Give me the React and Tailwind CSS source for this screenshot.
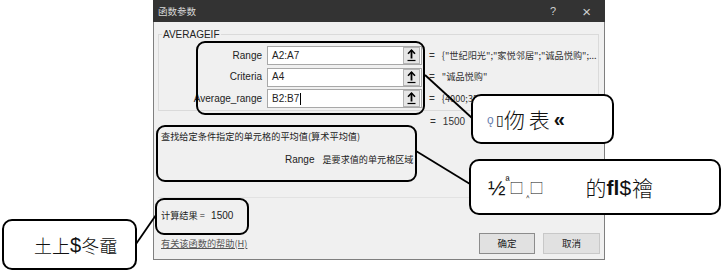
import React from "react";

const UI = { fontFamily: '"Liberation Sans", "Noto Sans CJK SC", sans-serif' };
const CJK = { fontFamily: '"Noto Sans CJK SC", "Liberation Sans", sans-serif' };

function RefBtn() {
  return (
    <div className="w-[17px] h-[17px] my-auto mr-[1px] bg-[#e6e6e6] border border-[#b5b5b5] flex items-center justify-center">
      <svg width="11" height="13" viewBox="0 0 11 13">
        <path d="M5.5 1 L5.5 9.5" stroke="#000" strokeWidth="1.8" />
        <path d="M2 4.8 L5.5 1.2 L9 4.8" fill="none" stroke="#000" strokeWidth="1.6" />
        <path d="M1.5 11.5 L9.5 11.5" stroke="#000" strokeWidth="1.2" />
      </svg>
    </div>
  );
}

function Row({ label, value, result, caret }) {
  return (
    <div className="flex items-center h-[19px]">
      <div className="w-[103px] text-right text-[10px] text-[#222] leading-none">{label}</div>
      <div className="ml-[5px] w-[155px] h-[19px] bg-white border border-[#a8a8a8] flex">
        <div className="flex-1 flex items-center pl-[4px] text-[10px] text-[#222] leading-none">
          {value}
          {caret && <span className="inline-block w-px h-[12px] bg-black ml-[1px]" />}
        </div>
        <RefBtn />
      </div>
      <div className="ml-[7px] text-[10px] text-[#333] leading-none">=</div>
      <div className="ml-[7px] text-[9.2px] text-[#333] leading-none whitespace-nowrap" style={CJK}>{result}</div>
    </div>
  );
}

export default function App() {
  return (
    <div className="relative w-[723px] h-[271px] bg-white overflow-hidden" style={UI}>
      {/* dialog */}
      <div className="ml-[153px] w-[452px] h-[260px] flex flex-col">
        <div className="h-[22px] bg-[#333333] flex items-center text-[#d8d8d8] shrink-0">
          <span className="ml-[5px] text-[9.5px]" style={CJK}>函数参数</span>
          <span className="ml-auto text-[11px] text-[#cfcfcf] mr-[26px]">?</span>
          <span className="text-[15px] font-light text-[#cfcfcf] mr-[14px] leading-none">×</span>
        </div>
        <div className="flex-1 bg-[#f0f0f0] border-x border-b border-[#7f7f7f] flex flex-col pt-[12px] px-[4px] pb-[5px]">
          {/* group box */}
          <div className="relative h-[77px] border border-[#dadada] mr-[1px] pt-[11px] flex flex-col gap-[2.5px]">
            <span className="absolute -top-[7px] left-[3px] bg-[#f0f0f0] px-[1px] text-[10px] text-[#222] leading-[13px]">AVERAGEIF</span>
            <Row label="Range" value="A2:A7" result={'{"世纪阳光";"家悦邻居";"诚品悦购";...'} />
            <Row label="Criteria" value="A4" result={'"诚品悦购"'} />
            <Row label="Average_range" value="B2:B7" caret result={"{4000;3500;3000;2000;1500;2500}"} />
          </div>
          <div className="mt-[4px] h-[14px] flex items-center text-[10px] text-[#333] leading-none">
            <span className="ml-[272px]">=</span>
            <span className="ml-[7px]">1500</span>
          </div>
          <div className="mt-px h-[14px] flex items-center pl-[3px] text-[9.2px] text-[#222] leading-none" style={CJK}>
            查找给定条件指定的单元格的平均值(算术平均值)
          </div>
          <div className="mt-[9px] h-[14px] flex items-center pl-[127px] text-[9.1px] text-[#222] leading-none" style={CJK}>
            <span className="text-[10px]" style={UI}>Range</span>
            <span className="ml-[8px]">是要求值的单元格区域</span>
          </div>
          <div className="mt-[30px] h-px bg-[#e2e2e2] mr-[1px]" />
          <div className="mt-[11px] h-[14px] flex items-center pl-[3px] text-[9.2px] text-[#222] leading-none whitespace-pre" style={CJK}>
            计算结果 =   <span className="text-[10px]" style={UI}>1500</span>
          </div>
          <div className="mt-[10px] h-[21px] flex items-center">
            <span className="ml-[3px] text-[9.2px] text-[#555] underline leading-none" style={CJK}>有关该函数的帮助(H)</span>
            <div className="ml-auto w-[56px] h-[21px] bg-[#e1e1e1] border border-[#8c8c8c] flex items-center justify-center text-[9.5px] text-[#222]" style={CJK}>确定</div>
            <div className="ml-[8px] w-[57px] h-[21px] bg-[#e1e1e1] border border-[#c8c8c8] flex items-center justify-center text-[9.5px] text-[#222]" style={CJK}>取消</div>
          </div>
        </div>
      </div>

      {/* annotation lines */}
      <svg className="absolute left-0 top-0 pointer-events-none" width="723" height="271">
        <line x1="425" y1="75" x2="472" y2="118" stroke="#000" strokeWidth="1.8" />
        <line x1="416" y1="151" x2="470" y2="184" stroke="#000" strokeWidth="1.8" />
        <line x1="136" y1="244" x2="156" y2="215" stroke="#000" strokeWidth="1.8" />
      </svg>

      {/* callouts */}
      <div className="absolute left-[196px] top-[41px] w-[229px] h-[74px] border-2 border-black rounded-[9px]" />
      <div className="absolute left-[156px] top-[125px] w-[261px] h-[57px] border-2 border-black rounded-[9px]" />
      <div className="absolute left-[155px] top-[198px] w-[94px] h-[37px] border-2 border-black rounded-[9px]" />

      <div className="absolute left-[471px] top-[94px] w-[143px] h-[50px] bg-white border-2 border-black rounded-[10px] flex items-center pl-[14px] text-[21px] text-[#111] leading-none" style={CJK}>
        <span className="text-[12px] text-[#6a7fb0]">ǫ</span>
        <span className="text-[14px] font-light ml-[2px]">▯</span>
        <span className="font-light">伆</span>
        <span className="font-light ml-[4px]">表</span>
        <span className="ml-[4px] text-[20px] font-bold" style={UI}>«</span>
      </div>

      <div className="absolute left-[469px] top-[159px] w-[252px] h-[56px] bg-white border-2 border-black rounded-[10px] flex items-center pl-[17px] text-[21px] text-[#111] leading-none" style={CJK}>
        <span style={UI}>½</span>
        <span className="text-[11px] self-start mt-[14px]" style={UI}>ª</span>
        <span className="text-[14px] font-light">□</span>
        <span className="text-[9px] mt-[10px] ml-[2px]">‸</span>
        <span className="text-[14px] font-light">□</span>
        <span className="ml-[42px] font-light">的</span>
        <span className="font-bold" style={UI}>ﬂ</span>
        <span style={UI}>$</span>
        <span className="font-light ml-[1px]">禬</span>
      </div>

      <div className="absolute left-[2px] top-[219px] w-[135px] h-[51px] bg-white border-2 border-black rounded-[10px] flex items-center pl-[30px] text-[18px] text-[#111] leading-none" style={CJK}>
        <span className="font-light">土</span>
        <span className="font-light">上</span>
        <span className="text-[20px]" style={UI}>$</span>
        <span className="font-light">冬</span>
        <span className="font-light">黿</span>
      </div>
    </div>
  );
}
